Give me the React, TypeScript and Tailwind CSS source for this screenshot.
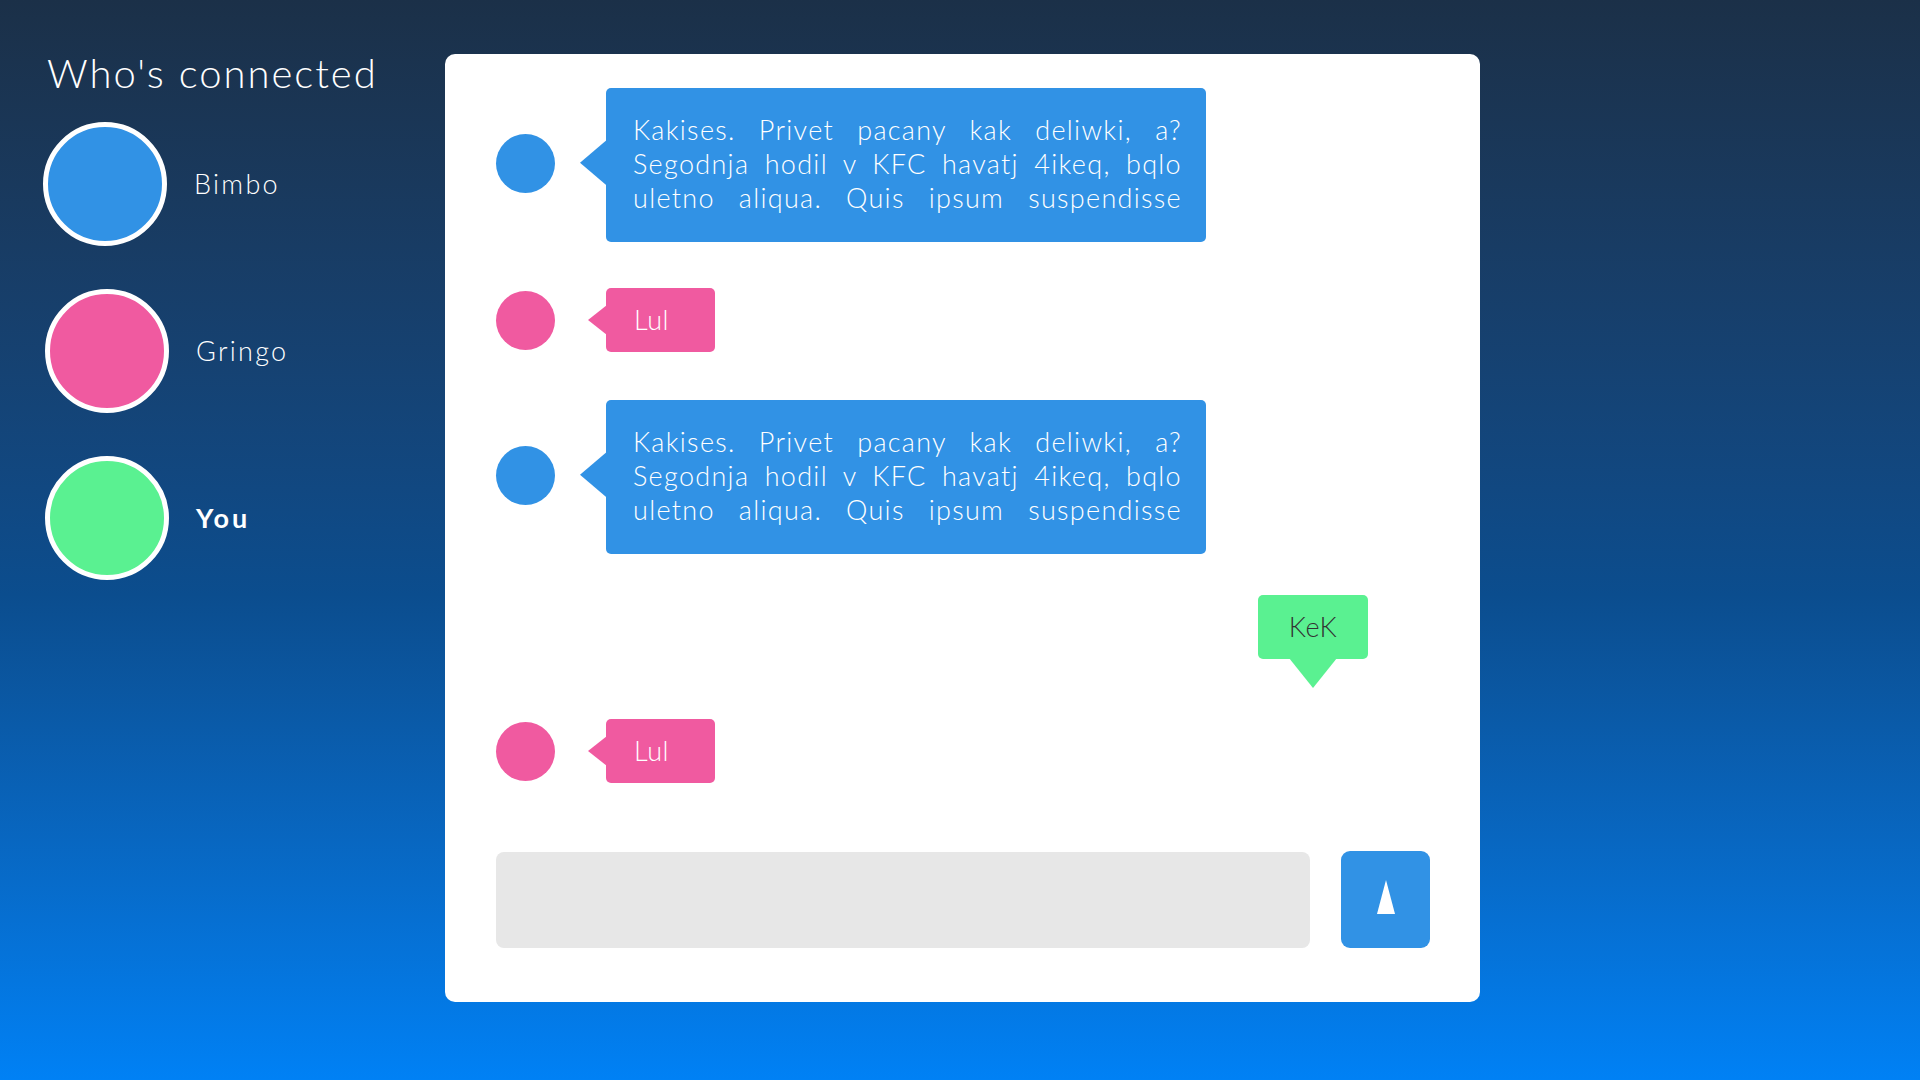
import React from "react";

type Person = { name: string; color: string; bold?: boolean };

const people: Person[] = [
  { name: "Bimbo", color: "bg-[#3192e5]" },
  { name: "Gringo", color: "bg-[#f05aa0]" },
  { name: "You", color: "bg-[#5af191]", bold: true },
];

const longLines = [
  "Kakises. Privet pacany kak deliwki, a?",
  "Segodnja hodil v KFC havatj 4ikeq, bqlo",
  "uletno aliqua. Quis ipsum suspendisse",
];

function LongMessage() {
  return (
    <div className="flex items-center">
      <div className="-mt-[4px] h-[59px] w-[59px] shrink-0 rounded-full bg-[#3192e5]" />
      <div className="relative ml-[51px] h-[154px] w-[600px] rounded-[5px] bg-[#3192e5] pl-[27px] pr-[24px] pt-[25px] text-[27px] font-light leading-[34px] tracking-[1.3px] text-white">
        <div className="absolute left-[-26px] top-1/2 h-0 w-0 -translate-y-[55%] border-y-[23px] border-r-[27px] border-y-transparent border-r-[#3192e5]" />
        {longLines.map((line) => (
          <div key={line} className="whitespace-nowrap text-justify [text-align-last:justify]">
            {line}
          </div>
        ))}
      </div>
    </div>
  );
}

function ShortMessage({ text }: { text: string }) {
  return (
    <div className="flex items-center">
      <div className="h-[59px] w-[59px] shrink-0 rounded-full bg-[#f05aa0]" />
      <div className="relative ml-[51px] flex h-[64px] w-[109px] items-center rounded-[5px] bg-[#f05aa0] pl-[28px] text-[27px] font-light tracking-[0.5px] text-white">
        <div className="absolute left-[-18px] top-1/2 h-0 w-0 -translate-y-1/2 border-y-[15px] border-r-[19px] border-y-transparent border-r-[#f05aa0]" />
        {text}
      </div>
    </div>
  );
}

export default function App() {
  return (
    <div className="flex h-[1080px] w-[1920px] bg-gradient-to-b from-[#1b3048] via-[#0b4d8e] via-55% to-[#0081f5] font-['Lato','Noto_Sans',sans-serif]">
      {/* who's connected */}
      <div className="w-[445px] shrink-0 pl-[43px] pt-[49px]">
        <h1 className="ml-[4px] h-[48px] text-[40px] font-light leading-[48px] tracking-[2px] text-white">
          Who's connected
        </h1>
        <div className="mt-[25px] flex flex-col gap-[43px]">
          {people.map((p, i) => (
            <div key={p.name} className={`flex items-center ${i > 0 ? "ml-[2px]" : ""}`}>
              <div className={`h-[124px] w-[124px] rounded-full border-[5px] border-white ${p.color}`} />
              <span
                className={`ml-[27px] text-[27px] text-white ${p.bold ? "font-bold tracking-[3px]" : "font-light tracking-[2.3px]"}`}
              >
                {p.name}
              </span>
            </div>
          ))}
        </div>
      </div>

      {/* chat */}
      <div className="mt-[54px] flex h-[948px] w-[1035px] flex-col rounded-[10px] bg-white pl-[51px] pr-[49px] pt-[34px]">
        <LongMessage />
        <div className="mt-[46px]">
          <ShortMessage text="Lul" />
        </div>
        <div className="mt-[48px]">
          <LongMessage />
        </div>
        <div className="mt-[41px] flex justify-end pr-[63px]">
          <div className="relative flex h-[64px] w-[110px] items-center justify-center rounded-[5px] bg-[#5af191] text-[27px] font-light tracking-[0.5px] text-[#333333]">
            KeK
            <div className="absolute bottom-[-29px] left-1/2 h-0 w-0 -translate-x-1/2 border-x-[24px] border-t-[30px] border-x-transparent border-t-[#5af191]" />
          </div>
        </div>
        <div className="mt-[60px]">
          <ShortMessage text="Lul" />
        </div>

        <div className="mt-auto mb-[54px] flex items-center gap-[31px]">
          <div className="h-[96px] w-[814px] rounded-[8px] bg-[#e7e7e7]" />
          <button className="flex h-[97px] w-[89px] items-center justify-center rounded-[9px] bg-[#3192e5]">
            <svg width="18" height="34" viewBox="0 0 18 34" className="-mt-[5px]">
              <polygon points="9,0 18,34 0,34" fill="#ffffff" />
            </svg>
          </button>
        </div>
      </div>
    </div>
  );
}
